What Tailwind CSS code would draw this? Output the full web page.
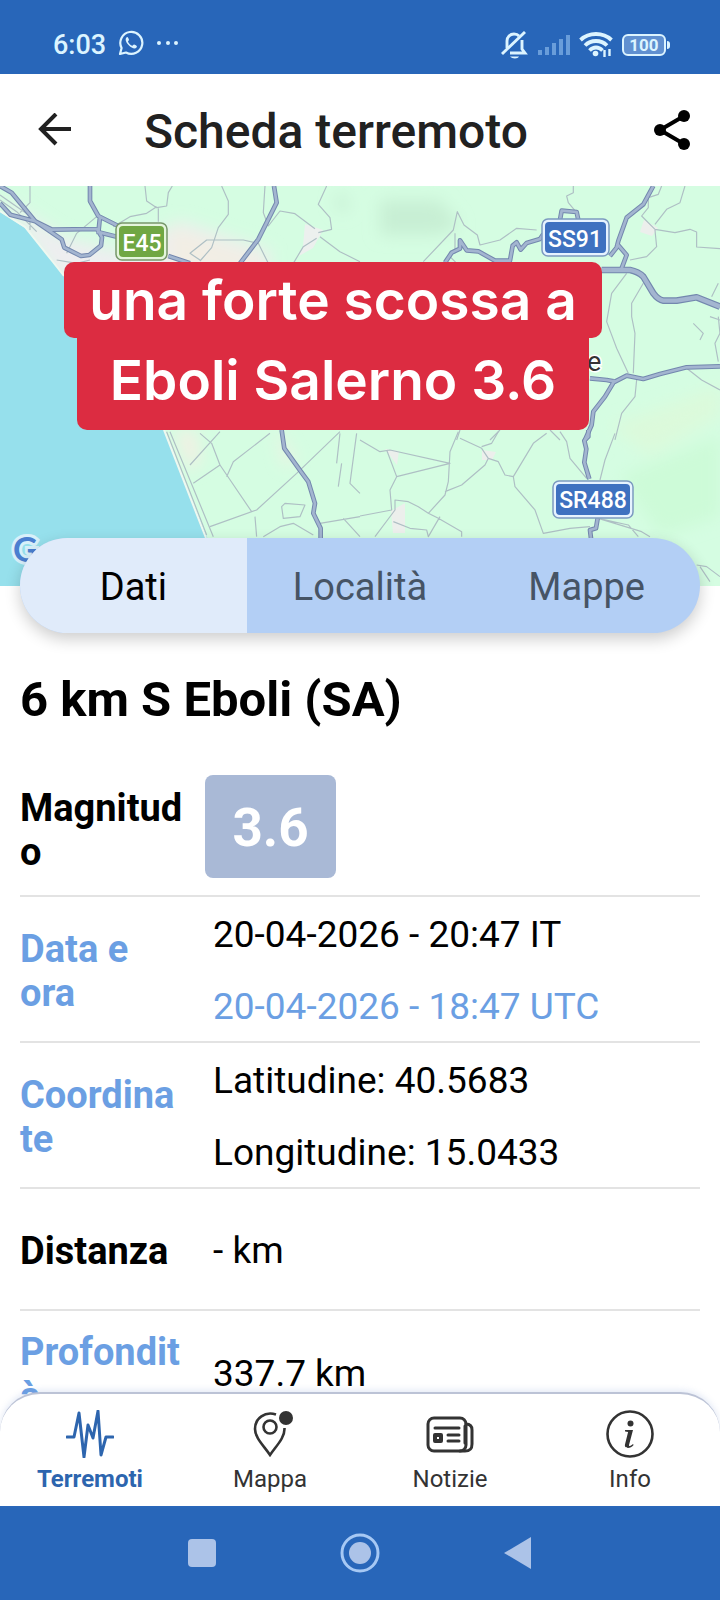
<!DOCTYPE html>
<html lang="it">
<head>
    <meta charset="UTF-8">
    <meta name="viewport" content="width=device-width, initial-scale=1.0">
    <title>Scheda terremoto</title>
    <script src="https://cdn.jsdelivr.net/npm/@tailwindcss/browser@4"></script>
</head>
<body class="bg-white font-['Roboto',sans-serif] text-black">
    <div class="flex h-screen flex-col overflow-hidden">
        <!-- Status bar -->
        <div class="flex h-[74px] shrink-0 items-end justify-between bg-[#2866b9] pr-[50px] pb-[15px] pl-[53px] text-[#dcf4ff]">
            <div class="flex items-center gap-3">
                <span class="pt-1 text-[27px] leading-7 font-medium">6:03</span>
                <svg class="h-[26px] w-[26px]" viewBox="0 0 26 26" fill="none" stroke="currentColor" stroke-width="2.200">
                    <path d="M2 24l1.600-6A11 11 0 1 1 8 22.500z" stroke-linejoin="round" />
                    <path d="M8.500 7.500c-2 2 0 5.500 2.500 8s6 4 7.500 2c1-1.300.4-1.800-2.300-3-.8-.3-1.200 1.300-2 1.200-1.500-.4-3.500-2.200-4.200-4-.2-.8 1.200-1 1-1.900C10 7 9.500 6.500 8.500 7.500z" fill="currentColor" stroke="none" />
                </svg>
                <svg class="h-[26px] w-6" viewBox="0 0 24 26" fill="currentColor">
                    <circle cx="3" cy="13" r="2" /><circle cx="12" cy="13" r="2" /><circle cx="20" cy="13" r="2" />
                </svg>
            </div>
            <div class="flex items-center gap-[9px]">
                <svg class="h-7 w-[27px]" viewBox="0 0 27 28" fill="none" stroke="currentColor" stroke-width="2.900">
                    <path d="M6 17v-7c0-4 3-7 7-7 2 0 4 .8 5 2M21 9v9l3 4H9" />
                    <path d="M1 23L24 1" />
                    <path d="M9 25.500h9c-1 2.500-7 2.500-9 0z" fill="currentColor" stroke="none" />
                </svg>
                <svg class="h-7 w-[33px]" viewBox="0 0 33 28" fill="#7fb0e6">
                    <path d="M1 19h4v5H1zM8 16h4v8H8zM15 12h4v12h-4zM22 8h4v16h-4zM29 4h4v20h-4z" opacity=".75" />
                </svg>
                <svg class="h-7 w-[34px]" viewBox="0 0 34 28" fill="none" stroke="currentColor" stroke-width="3.800">
                    <path d="M1.500 9C10 1 24 1 32.500 9M6 14.500c6-6 16-6 22 0M10.500 19.500c4-4 9-4 13 0" />
                    <circle cx="16.500" cy="22.500" r="2.800" fill="currentColor" stroke="none" />
                    <path d="M25.500 19v7M30.500 18v7" stroke-width="2.400" />
                </svg>
                <div class="flex items-center gap-px">
                    <span class="flex h-[22px] w-11 items-center justify-center rounded-md border-2 border-current bg-[#6090d0] text-[17px] leading-none font-bold">100</span>
                    <span class="h-2 w-[3px] rounded-r bg-current"></span>
                </div>
            </div>
        </div>

        <!-- Header -->
        <header class="flex h-28 shrink-0 items-center pr-[30px] pl-[38px]">
            <button type="button" aria-label="Indietro" class="mr-[72px]">
                <svg class="h-[34px] w-[34px]" viewBox="0 0 34 34" fill="none" stroke="#212121" stroke-width="4">
                    <path d="M33 16H4M18 1L3 16l15 15" />
                </svg>
            </button>
            <h1 class="flex-1 pt-1 text-5xl leading-none font-medium text-[#212121]">Scheda terremoto</h1>
            <button type="button" aria-label="Condividi">
                <svg class="h-10 w-9" viewBox="0 0 36 40">
                    <path d="M30 6L6 20l24 14" fill="none" stroke="#000" stroke-width="4" />
                    <circle cx="30" cy="6" r="6" /><circle cx="6" cy="20" r="6" /><circle cx="30" cy="34" r="6" />
                </svg>
            </button>
        </header>

        <main class="flex-1 overflow-y-auto [scrollbar-width:none]">
            <!-- Map -->
            <div class="relative h-[400px] overflow-hidden bg-[#d5fde2]">
                <svg class="h-full w-full" viewBox="0 0 720 400" preserveAspectRatio="xMidYMid slice" fill="none">
                    <defs>
                        <filter id="soft"><feGaussianBlur stdDeviation="8" /></filter>
                    </defs>
                    <rect width="720" height="400" fill="#d5fde2" />
                    <!-- relief and built-up areas -->
                    <g filter="url(#soft)">
                        <path d="M380 14l60 0 20 25-20 10-60 0zM340 5l10 15-8 8-8-12z" fill="#c8efd4" />
                        <path d="M610 240l110-40v30l-70 40z" fill="#dcfadb" />
                        <path d="M620 290l100-40v80l-60 20z" fill="#cdfbd8" />
                        <path d="M0 10l60 40 60 15 60-30 90 30v30H60z" fill="#eeeef0" />
                        <path d="M170 40l30 10 60 20 10 15H170z" fill="#f2eee4" />
                        <path d="M175 245l20 0 5 30-10 10zM275 240l20 35-10 5z" fill="#f4efe4" />
                    </g>
                    <path d="M305 38l18 6-10 18-14 8-4 10 8-20z" fill="#ecf0ee" />
                    <path d="M644 34l14 8-6 8-12-4zM385 263l14 2-2 14zM391 325l14-8 0 30-12 0zM482 264l14 2-4 8-10 0z" fill="#ecefec" />
                    <!-- sea -->
                    <path d="M0 26L25 42 53 76 64 90 78 150 130 220 162 240 213 366V400H0z" fill="#96e0ec" />
                    <path d="M0 25L25 41 53 76 64 90M164 244l42 108" stroke="#eef8f0" stroke-width="2" />

                    <!-- minor roads -->
                    <g stroke="#aebfc4" stroke-width="3.500" stroke-linejoin="round">
                        <g transform="translate(0 -6) scale(.3333)">
                            <path d="M90 18v50l-30 30M0 60l50 35 60 60M200 220l30-60 60-50M435 18l5 45 30 20 30-5 5-40 12-20M470 80l-30 20-50 10-50 30M475 85v40M665 18l20 45v40l-30 40-20 60-35 40M795 18l-5 80 15 40 35-45 45 8 60 45M600 240l-30-20 50-40h110l45 10 30 60M980 18l-25 55 35 40 5 35-40 10M950 175l-40 25-30 50M960 170l60 45 60 30M170 240l60 10 40-10M90 100v50M0 45l100 70" />
                        </g>
                        <g transform="translate(360 -6) scale(.3333)">
                            <path d="M190 245l90-95 12-55 20 40 40 30 8 30 60-15 50-35 60 5M285 160v60M270 230l30 30M640 18v20l-20 10 5 20 25 30M905 18l-10 25-30 10v30l-20 25 40 40 60 10 45-10 20 8v45l70 5M885 150l5 50-30 30-50 10M975 18l-15 50-40 20-35 45M800 280l-45 60-15 85 30 80 35 75M850 310l-35 60v40l10 50-5 120M1075 310l-20 40M1000 430l30 30-10 20M1075 410l5 50-15 30 10 55M830 600l-5 50-40 50-20 80M980 565l45 35 55 30M1080 420l-30-10M300 750l-10 30M420 750l-30 30M570 750l30 30" />
                        </g>
                        <g transform="translate(0 244) scale(.3333)">
                            <path d="M510 5l130 315M500 5l120 310M660 5l-90 100M600 10l35 30 25 65-80 55M660 105l95 140M810 10L700 95l-20 45M1020 5l-130 125-120 110-140 50M1020 10l-10 90M1070 10l-20 150 30 30M1015 170l10-70M765 260l5 60M790 320l50-30 40-10 60 35M960 280l120-20M1030 265l50 55M845 230l10-10 60 5-15 35-50 5z" />
                        </g>
                        <g transform="translate(360 244) scale(.3333)">
                            <path d="M0 30l60 35 30-5 180 40-160 40-20 40 5 60-95 18M80 60l30 80M295 5l-25 60-5 90-10 40-50 55 30 15 70 40v15M205 250l-30-20-30-15-40-5v30l-60 80M100 275l50 20 50 5 5 20 35-60M255 185l50-20 70-60 10-20-20-30-65-30M365 50l30-10 20-35M385 85l30 10 20 40 25 5 60-100 40-30M460 140l5 30 60 70 25 70 80-15 60-5M600 5l20 30 10 50 50 60M765 10l-30 80-15 60M715 265l90 20 30 35M715 265l130 40 25 15M1010 405l30 5 40 30M1020 410l30 45" />
                        </g>
                    </g>
                    <!-- main roads: casing, then fill -->
                    <g stroke="#7387ae" stroke-width="14" stroke-linejoin="round">
                        <g transform="translate(0 -6) scale(.3333)">
                            <path id="r1" d="M0 18l35 20 70 85 80 55 8 25 50 25 25-3 35-28 3-25-15-25-135 2-50-25-75-20L0 70M270 18v45l25 45 60 30M300 110l-5 50M290 155l60 15M505 228l65 22M822 18l8 50-55 110-55 72" />
                        </g>
                        <g transform="translate(360 -6) scale(.3333)">
                            <path id="r2" d="M255 248l20-30 25-12v-25l20 30 35 3 50 28h45l8-45 12-10 12 22 18-20 40-12 10-15M600 120l5-28 45 4 5 24M880 18l-30 55-50 40-25 70-5 20-20 25M770 190l30 35-15 40M690 595l50 5 25 5 35-18 50 10 50-15 80-20 100-3M765 600l-30 50-35 45-5 40-20 45" />
                            <path d="M725 270h85q25 5 40 20l30 50q15 20 30 22h40l60-10 70 28" stroke-width="20" />
                        </g>
                        <g transform="translate(0 244) scale(.3333)">
                            <path id="r4" d="M845 0l8 55 50 70 22 30 20 65-5 30 22 45v30" />
                        </g>
                        <g transform="translate(360 244) scale(.3333)">
                            <path id="r5" d="M685 0v20l-12 12 6 25-6 40 15 50M713 265l-5 30-18 5 3 25" />
                        </g>
                    </g>
                    <g stroke="#a3b5d0" stroke-width="8" stroke-linejoin="round">
                        <g transform="translate(0 -6) scale(.3333)"><use href="#r1" /></g>
                        <g transform="translate(360 -6) scale(.3333)">
                            <use href="#r2" />
                            <path d="M725 270h85q25 5 40 20l30 50q15 20 30 22h40l60-10 70 28" stroke-width="13" />
                        </g>
                        <g transform="translate(0 244) scale(.3333)"><use href="#r4" /></g>
                        <g transform="translate(360 244) scale(.3333)"><use href="#r5" /></g>
                    </g>

                    <!-- road shields -->
                    <g font-family="Roboto, sans-serif" font-weight="500" font-size="23" fill="#fff" text-anchor="middle">
                        <rect x="116" y="37" width="51" height="37" rx="6" fill="#e4f5dc" stroke="#77976a" stroke-width="1.500" />
                        <rect x="119" y="40" width="45" height="31" rx="4" fill="#70a743" />
                        <text x="142" y="65">E45</text>
                        <rect x="542" y="33" width="67" height="37" rx="6" fill="#e6f3ff" stroke="#7c9ac0" stroke-width="1.500" />
                        <rect x="545" y="36" width="61" height="31" rx="4" fill="#3e71c0" />
                        <text x="575" y="61">SS91</text>
                        <rect x="553" y="295" width="80" height="37" rx="6" fill="#e6f3ff" stroke="#7c9ac0" stroke-width="1.500" />
                        <rect x="556" y="298" width="74" height="31" rx="4" fill="#3e71c0" />
                        <text x="593" y="322">SR488</text>
                    </g>
                    <text x="587" y="185" font-family="Roboto, sans-serif" font-size="27" fill="#333" stroke="#fff" stroke-width="3" paint-order="stroke">e</text>
                    <text x="13" y="376" font-family="Lato, sans-serif" font-size="34" font-weight="bold" fill="#4a7fd0" stroke="#d8f0fa" stroke-width="6" paint-order="stroke">G</text>
                </svg>

                <!-- Caption -->
                <div class="absolute top-[76px] left-16 flex flex-col items-center font-['Inter',sans-serif] text-[55px] leading-none font-semibold whitespace-nowrap text-white">
                    <span class="flex h-[76px] w-[538px] items-center justify-center rounded-[10px] bg-[#dc2c41]">una forte scossa a</span>
                    <span class="-mt-2 flex h-[100px] w-[512px] items-center justify-center rounded-b-[10px] bg-[#dc2c41]">Eboli Salerno 3.6</span>
                </div>
            </div>

            <!-- Tabs -->
            <div role="tablist" class="relative mx-5 -mt-12 grid h-[95px] grid-cols-3 overflow-hidden rounded-full bg-[#b3cff5] text-[38px] text-[#465465] shadow-[0_6px_16px_rgba(0,0,0,0.2)]">
                <button type="button" role="tab" aria-selected="true" class="bg-[#e0ebfa] pt-1 text-black">Dati</button>
                <button type="button" role="tab" aria-selected="false" class="pt-1">Località</button>
                <button type="button" role="tab" aria-selected="false" class="pt-1">Mappe</button>
            </div>

            <section class="px-5 pt-9">
                <h2 class="text-[49px] leading-[62px] font-bold">6 km S Eboli (SA)</h2>
                <dl class="mt-[26px] text-[37px] leading-[44px]">
                    <div class="flex h-[140px] items-center border-b-2 border-[#e3e3e3]">
                        <dt class="w-[165px] shrink-0 pt-2 text-[38px] font-bold break-all">Magnitudo</dt>
                        <dd class="ml-5 flex h-[103px] w-[131px] items-center justify-center rounded-lg bg-[#a9b9d6] pt-1 text-[53px] font-bold text-white">3.6</dd>
                    </div>
                    <div class="flex h-[146px] items-center border-b-2 border-[#e3e3e3] pt-1">
                        <dt class="w-[165px] shrink-0 pr-8 text-[38px] font-bold text-[#6b9fe3]">Data e ora</dt>
                        <dd class="ml-7 leading-[72px]">20-04-2026 - 20:47 IT<br><span class="text-[#6b9fe3]">20-04-2026 - 18:47 UTC</span></dd>
                    </div>
                    <div class="flex h-[146px] items-center border-b-2 border-[#e3e3e3] pt-1">
                        <dt class="w-[165px] shrink-0 text-[38px] font-bold break-all text-[#6b9fe3]">Coordinate</dt>
                        <dd class="ml-7 leading-[72px]">Latitudine: 40.5683<br>Longitudine: 15.0433</dd>
                    </div>
                    <div class="flex h-[122px] items-center border-b-2 border-[#e3e3e3] pt-1">
                        <dt class="w-[165px] shrink-0 text-[38px] font-bold">Distanza</dt>
                        <dd class="ml-7">- km</dd>
                    </div>
                    <div class="flex h-[122px] items-center pt-1">
                        <dt class="w-[165px] shrink-0 text-[38px] font-bold break-all text-[#6b9fe3]">Profondità</dt>
                        <dd class="ml-7">337.7 km</dd>
                    </div>
                </dl>
            </section>
        </main>

        <!-- Bottom navigation -->
        <nav class="relative -mt-10 grid h-[114px] shrink-0 grid-cols-4 rounded-t-[40px] border-t-2 border-[#bcc3d6] bg-white text-2xl leading-7 text-[#333] shadow-[0_-2px_6px_rgba(120,150,210,0.2)]">
            <a href="#terremoti" aria-current="page" class="flex flex-col items-center gap-[7px] pt-4 font-bold text-[#2d65ae]">
                <svg class="h-12 w-12" viewBox="0 0 48 48" fill="none" stroke="currentColor" stroke-width="3" stroke-linejoin="round" stroke-linecap="round">
                    <path d="M1 27h7l5-24 5 44 4-32 5 13 5-27 3 44 5-18h7" />
                </svg>
                Terremoti
            </a>
            <a href="#mappa" class="flex flex-col items-center gap-[7px] pt-4">
                <svg class="h-12 w-12" viewBox="0 0 48 48" fill="none" stroke="currentColor" stroke-width="2.600">
                    <path d="M30 4.500C19 1 9 8 9 19c0 9 9 17 15 26 6-9 15-17 14.500-27" />
                    <circle cx="24" cy="17" r="6.500" />
                    <circle cx="40" cy="8" r="7" fill="currentColor" stroke="none" />
                </svg>
                Mappa
            </a>
            <a href="#notizie" class="flex flex-col items-center gap-[7px] pt-4">
                <svg class="h-12 w-12" viewBox="0 0 48 48" fill="none" stroke="currentColor" stroke-width="3" stroke-linecap="round">
                    <rect x="2" y="8" width="38" height="33" rx="6" />
                    <path d="M9 18h24M22 25h11M22 31h11M40 14c4 0 6 2 6 6v14c0 5-2 7-7 7h-5M39 16v17" />
                    <rect x="9" y="25" width="6" height="6" stroke-width="4" stroke-linejoin="round" />
                </svg>
                Notizie
            </a>
            <a href="#info" class="flex flex-col items-center gap-[7px] pt-4">
                <svg class="h-12 w-12" viewBox="0 0 48 48" fill="none" stroke="currentColor" stroke-width="2.600">
                    <circle cx="24" cy="24" r="22.500" />
                    <circle cx="24.500" cy="13.500" r="3" fill="currentColor" stroke="none" />
                    <path d="M19 20h8l-4 15c-.3 1.500 1 1.500 4-1l.6 1c-3 4-10 4-8.500-1l3-12-3-.6z" fill="currentColor" stroke="none" />
                </svg>
                Info
            </a>
        </nav>

        <!-- System buttons -->
        <div class="flex h-[94px] shrink-0 items-center justify-center gap-[118px] bg-[#2866b9]">
            <button type="button" aria-label="Recenti">
                <svg class="h-10 w-10" viewBox="0 0 40 40"><rect x="6" y="6" width="28" height="28" rx="4" fill="#acc3e8" /></svg>
            </button>
            <button type="button" aria-label="Home">
                <svg class="h-10 w-10" viewBox="0 0 40 40">
                    <circle cx="20" cy="20" r="18" fill="none" stroke="#a6c8f4" stroke-width="3" />
                    <circle cx="20" cy="20" r="11" fill="#acc3e8" />
                </svg>
            </button>
            <button type="button" aria-label="Indietro">
                <svg class="h-10 w-10" viewBox="0 0 40 40"><path d="M33 4v32L6 20z" fill="#acc3e8" /></svg>
            </button>
        </div>
    </div>
</body>
</html>
